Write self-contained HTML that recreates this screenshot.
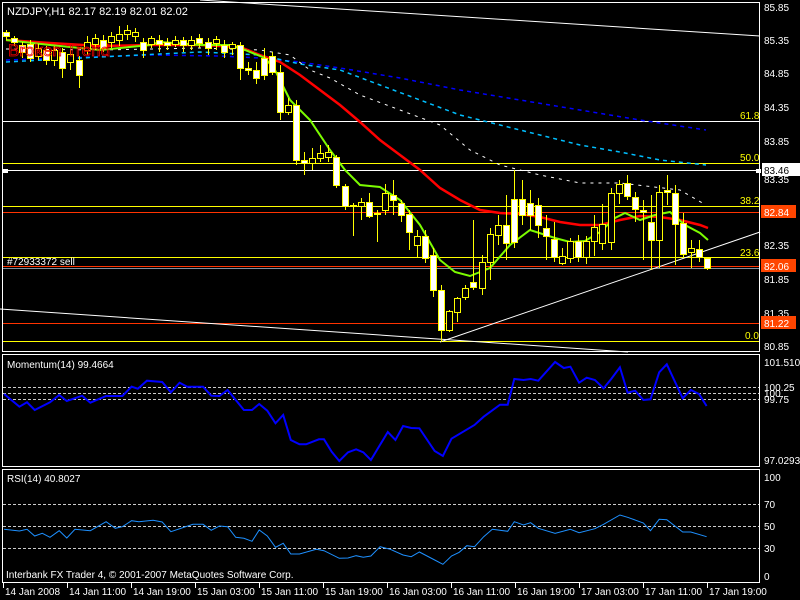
<!DOCTYPE html>
<html><head><meta charset="utf-8"><style>
html,body{margin:0;padding:0;background:#000;width:800px;height:600px;overflow:hidden}
svg{display:block}
text{font-family:"Liberation Sans",sans-serif}
</style></head><body>
<svg id="s" width="800" height="600" viewBox="0 0 800 600" xmlns="http://www.w3.org/2000/svg" shape-rendering="crispEdges" font-size="10">
<rect width="800" height="600" fill="#000"/>
<rect x="2.5" y="2.5" width="757" height="349" fill="none" stroke="#fff"/>
<rect x="2.5" y="354.5" width="757" height="112" fill="none" stroke="#fff"/>
<rect x="2.5" y="469.5" width="757" height="113" fill="none" stroke="#fff"/>
<line x1="3" y1="121.5" x2="759" y2="121.5" stroke="#fff"/>
<line x1="3" y1="163.5" x2="759" y2="163.5" stroke="#ffff00"/>
<line x1="3" y1="170.5" x2="759" y2="170.5" stroke="#fff"/>
<rect x="3" y="169" width="5" height="4" fill="#fff"/>
<rect x="756" y="169" width="5" height="4" fill="#fff"/>
<line x1="3" y1="206.5" x2="759" y2="206.5" stroke="#ffff00"/>
<line x1="3" y1="212.5" x2="759" y2="212.5" stroke="#ff3300"/>
<line x1="3" y1="257.5" x2="759" y2="257.5" stroke="#ffff00"/>
<line x1="3" y1="266.5" x2="759" y2="266.5" stroke="#ff3300"/>
<line x1="3" y1="268.5" x2="759" y2="268.5" stroke="#8090a0"/>
<line x1="3" y1="323.5" x2="759" y2="323.5" stroke="#ff3300"/>
<line x1="3" y1="341.5" x2="759" y2="341.5" stroke="#ffff00"/>
<line x1="200" y1="0" x2="760" y2="36" stroke="#fff" shape-rendering="auto"/>
<line x1="0" y1="309" x2="628" y2="352" stroke="#fff" shape-rendering="auto"/>
<line x1="440" y1="342" x2="760" y2="232" stroke="#fff" shape-rendering="auto"/>
<g id="ma"></g>
<g id="candles"></g>
<text x="7" y="15" fill="#fff" style="font-size:11px">NZDJPY,H1  82.17 82.19 82.01 82.02</text>
<text x="8" y="56" fill="none" stroke="#e00" stroke-width="0.8" style="font-size:17px" shape-rendering="auto">Broken Trend</text>
<text x="7" y="265" fill="#fff">#72933372 sell</text>
<g fill="#ffff00">
<text x="740" y="119">61.8</text><text x="740" y="161">50.0</text>
<text x="740" y="204">38.2</text><text x="740" y="256">23.6</text>
<text x="745" y="339">0.0</text>
</g>
<g fill="#fff">
<text x="764" y="11">85.85</text><text x="764" y="44">85.35</text>
<text x="764" y="77">84.85</text><text x="764" y="111">84.35</text>
<text x="764" y="145">83.85</text><text x="764" y="183">83.35</text>
<text x="764" y="249">82.35</text><text x="764" y="283">81.85</text>
<text x="764" y="317">81.35</text><text x="764" y="350">80.85</text>
</g>
<rect x="762" y="163" width="38" height="13" fill="#fff"/><text x="764" y="174" fill="#000">83.46</text>
<rect x="761" y="205" width="35" height="13" fill="#ff4500"/><text x="764" y="216" fill="#fff">82.84</text>
<rect x="761" y="259" width="35" height="13" fill="#ff4500"/><text x="764" y="270" fill="#fff">82.06</text>
<rect x="761" y="316" width="35" height="13" fill="#ff4500"/><text x="764" y="327" fill="#fff">81.22</text>
<g stroke="#ccc" stroke-dasharray="3,2">
<line x1="3" y1="387.5" x2="759" y2="387.5"/><line x1="3" y1="393.5" x2="759" y2="393.5"/><line x1="3" y1="399.5" x2="759" y2="399.5"/>
<line x1="3" y1="504.5" x2="759" y2="504.5"/><line x1="3" y1="526.5" x2="759" y2="526.5"/><line x1="3" y1="548.5" x2="759" y2="548.5"/>
</g>
<polyline id="mom" fill="none" stroke="#0000ff" stroke-width="2" shape-rendering="auto"/>
<polyline id="rsi" fill="none" stroke="#1e90ff" stroke-width="1" shape-rendering="auto"/>
<g fill="#fff">
<text x="7" y="368">Momentum(14) 99.4664</text>
<text x="764" y="366">101.5104</text>
<text x="764" y="391">100.25</text><text x="764" y="397">100</text><text x="764" y="403">99.75</text>
<text x="764" y="464">97.0293</text>
<text x="7" y="482">RSI(14) 40.8027</text>
<text x="764" y="481">100</text><text x="764" y="508">70</text><text x="764" y="530">50</text>
<text x="764" y="552">30</text><text x="764" y="580">0</text>
<text x="6" y="578">Interbank FX Trader 4, © 2001-2007 MetaQuotes Software Corp.</text>
</g>
<g id="taxis" fill="#fff"></g>
</svg>
<script>
var NS="http://www.w3.org/2000/svg";
function el(p,t,a){var e=document.createElementNS(NS,t);for(var k in a)e.setAttribute(k,a[k]);p.appendChild(e);return e;}
var C=[[32,36,30,40],[38,42,36,46],[45,52,42,58],[44,58,40,62],[56,48,44,60],[50,60,46,65],[60,50,46,66],[52,68,48,78],[62,54,50,70],[60,75,56,88],
[50,42,36,55],[44,38,34,50],[40,48,35,52],[42,36,32,48],[40,34,26,46],[34,30,25,40],[36,32,28,42],[42,50,38,58],[44,38,36,48],[40,44,35,52],
[42,45,38,50],[44,40,36,47],[40,45,37,52],[45,40,36,50],[38,43,34,48],[42,48,38,55],[43,39,36,50],[45,52,40,58],[48,44,42,55],[45,68,42,80],
[68,70,62,75],[70,78,62,84],[58,75,48,80],[56,72,52,75],[72,112,65,120],[112,105,98,115],[105,160,100,165],[160,163,152,175],[163,158,148,170],[158,153,145,162],
[157,152,145,162],[157,185,155,188],[186,206,184,210],[205,206,203,236],[206,202,198,220],[202,216,193,218],[213,214,210,242],[210,193,184,215],[195,200,180,215],[203,215,200,222],
[214,232,210,250],[245,236,230,258],[236,258,230,263],[255,290,248,297],[290,330,285,342],[330,311,310,332],[312,298,297,322],[297,288,285,300],[282,287,220,290],[288,262,255,295],
[262,234,228,280],[235,225,215,245],[225,243,195,260],[199,242,170,248],[199,215,180,225],[203,215,190,230],[205,225,198,238],[228,236,215,260],[239,257,222,262],[263,256,248,265],
[258,241,238,263],[241,257,235,262],[257,241,236,264],[241,227,215,256],[243,224,204,250],[242,193,188,250],[193,184,180,204],[183,196,175,200],[197,209,192,222],[210,212,200,260],
[222,240,195,270],[240,192,185,268],[190,192,175,205],[193,224,185,265],[223,254,213,258],[252,248,240,268],[249,257,240,262],[258,268,257,270]];
var g=document.getElementById("candles");
C.forEach(function(c,i){var x=Math.round(6+i*8.06);
el(g,"line",{x1:x+.5,x2:x+.5,y1:c[2],y2:c[3],stroke:"#ffff00"});
var t=Math.min(c[0],c[1]),b=Math.max(c[0],c[1]);if(b-t<1)b=t+1;
el(g,"rect",{x:x-2.5,y:t+.5,width:6,height:b-t,fill:c[1]>c[0]?"#fff":"#000",stroke:"#ffff00"});});
var ma=document.getElementById("ma");
function pl(pts,col,w,dash){el(ma,"polyline",{points:pts,fill:"none",stroke:col,"stroke-width":w,"stroke-dasharray":dash||"none","shape-rendering":"auto"});}
pl("6,60 150,55 220,56 260,58 300,62 340,68 400,78 460,90 520,100 580,110 640,120 706,130","#0000ff",1.5,"4,4");
pl("6,62 100,57 200,52 260,55 300,64 340,70 380,85 420,100 460,115 500,125 540,135 580,145 620,152 660,160 706,165","#00bfff",1.5,"4,4");
pl("6,49 100,50 200,48 260,50 290,55 310,70 330,78 360,95 400,110 440,125 470,150 500,165 540,175 580,183 620,183 680,190 706,205","#fff",1,"3,5");
pl("6,40 50,43 100,46 150,45 200,45 240,47 260,55 280,62 300,75 320,90 340,105 360,122 380,140 400,155 420,170 440,188 460,200 480,210 500,213 520,214 540,217 560,222 580,225 600,225 620,220 640,216 660,217 680,220 700,225 708,228","#ff0000",2.5);
pl("6,40 50,45 100,50 150,45 160,42 200,45 230,45 245,50 265,58 275,70 290,100 310,120 330,150 345,170 360,185 380,187 400,200 420,225 440,260 455,272 470,276 490,268 510,245 530,230 555,238 570,242 585,241 600,232 615,218 625,213 640,220 655,215 670,212 685,225 700,233 708,240","#7cfc00",2);
function tr(a){var o=[];for(var i=0;i<a.length;i+=2)o.push((a[i]/1.96).toFixed(1)+","+(a[i+1]/3+340).toFixed(1));return o.join(" ");}
document.getElementById("mom").setAttribute("points",tr([8,162,38,200,53,187,68,210,98,187,116,165,131,183,161,167,177,188,208,168,240,168,258,140,270,146,288,122,318,126,335,157,352,128,367,140,398,140,414,167,430,168,446,150,478,210,494,210,508,192,524,212,540,250,555,225,570,300,587,313,600,313,625,298,635,298,650,335,665,363,682,337,698,328,712,337,727,360,760,276,775,300,790,258,806,264,822,265,852,333,868,348,885,296,930,255,948,230,980,194,995,194,1008,117,1026,120,1040,117,1055,122,1088,66,1105,84,1118,80,1135,128,1150,113,1166,120,1183,145,1198,117,1215,82,1230,158,1245,152,1261,180,1275,178,1292,97,1307,73,1338,175,1354,150,1370,162,1385,198]));
document.getElementById("rsi").setAttribute("points",tr([8,568,38,573,53,568,68,588,83,580,98,592,116,572,131,594,147,568,177,572,208,545,226,565,240,560,258,542,272,545,300,541,318,546,335,575,378,553,398,553,414,571,430,558,446,560,462,592,478,595,494,604,508,570,524,588,540,622,555,610,570,642,587,642,620,628,635,632,665,655,682,654,698,647,712,652,727,648,745,620,765,628,790,645,806,650,822,636,852,660,868,673,885,648,900,637,915,617,930,620,948,590,965,568,995,574,1008,545,1026,555,1040,548,1055,565,1088,580,1118,568,1135,578,1166,566,1183,553,1215,525,1230,532,1261,549,1275,572,1292,538,1307,539,1338,576,1354,576,1385,590]));
var T=["14 Jan 2008","14 Jan 11:00","14 Jan 19:00","15 Jan 03:00","15 Jan 11:00","15 Jan 19:00","16 Jan 03:00","16 Jan 11:00","16 Jan 19:00","17 Jan 03:00","17 Jan 11:00","17 Jan 19:00"];
var ta=document.getElementById("taxis");
T.forEach(function(s,i){var x=3+i*64;el(ta,"line",{x1:x+.5,x2:x+.5,y1:583,y2:588,stroke:"#fff"});var t=el(ta,"text",{x:x+2,y:595});t.textContent=s;});
</script>
</body></html>
